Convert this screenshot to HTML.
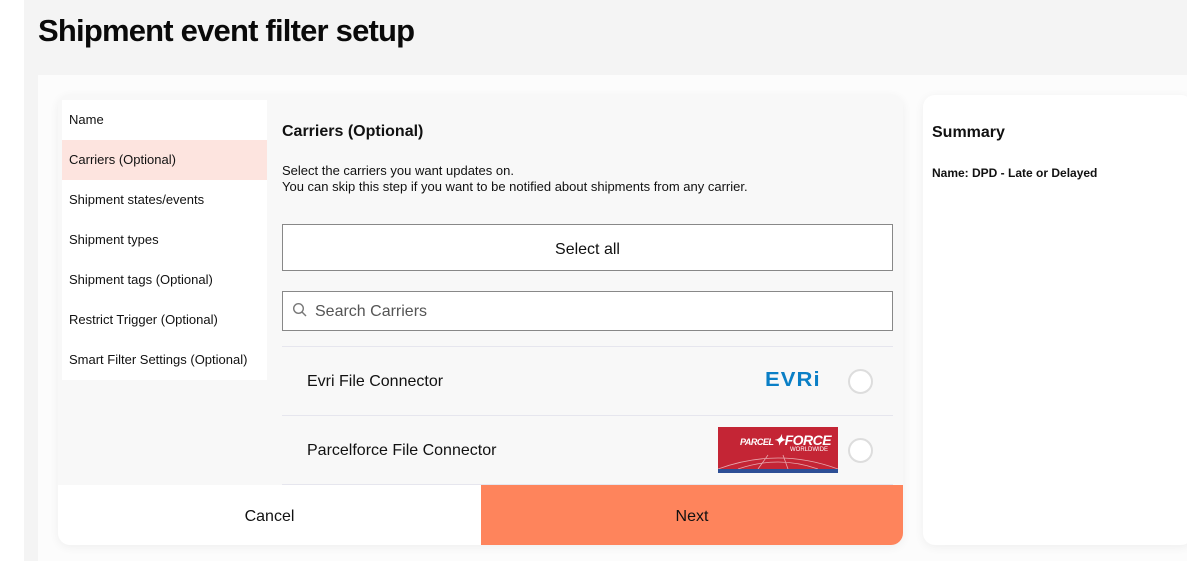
<!DOCTYPE html>
<html><head><style>
*{margin:0;padding:0;box-sizing:border-box}
body{width:1187px;height:561px;overflow:hidden;background:#fff;font-family:"Liberation Sans",sans-serif;color:#111;position:relative}
.abs{position:absolute}
.bg{left:24px;top:0;width:1163px;height:561px;background:#f4f4f4}
h1{position:absolute;left:38px;top:13px;font-size:31px;font-weight:bold;letter-spacing:-0.8px;color:#0a0a0a}
.inner{left:38px;top:75px;width:1149px;height:486px;background:#fcfcfc}
.card{left:58px;top:95px;width:845px;height:450px;background:#f8f8f8;border-radius:12px;box-shadow:0 2px 10px rgba(0,0,0,.06);overflow:hidden}
.side{left:62px;top:100px;width:205px;height:280px;background:#fff}
.side div{height:40px;line-height:40px;padding-left:7px;font-size:13px}
.side .act{background:#fde4df}
.sum{left:923px;top:95px;width:270px;height:450px;background:#fff;border-radius:12px;box-shadow:0 2px 10px rgba(0,0,0,.06)}
.btn{left:282px;top:224px;width:611px;height:47px;border:1.5px solid #888;background:#fff;text-align:center;line-height:50px;font-size:16px}
.search{left:282px;top:291px;width:611px;height:40px;border:1px solid #888;background:#fff;font-size:16px;color:#555;line-height:40px;padding-left:32px}
.row{left:282px;width:611px;height:69px;border-top:1px solid #e6e6ee;font-size:16px;line-height:68px;padding-left:25px}
.radio{width:25px;height:25px;border:2px solid #ddd;border-radius:50%;background:#fff}
</style></head><body>
<div class="abs bg"></div>
<h1>Shipment event filter setup</h1>
<div class="abs inner"></div>
<div class="abs card"></div>
<div class="abs side">
<div>Name</div><div class="act">Carriers (Optional)</div><div>Shipment states/events</div><div>Shipment types</div><div>Shipment tags (Optional)</div><div>Restrict Trigger (Optional)</div><div>Smart Filter Settings (Optional)</div>
</div>
<div class="abs" style="left:282px;top:123px;font-size:16px;font-weight:bold">Carriers (Optional)</div>
<div class="abs" style="left:282px;top:163px;font-size:13px;line-height:16px">Select the carriers you want updates on.<br>You can skip this step if you want to be notified about shipments from any carrier.</div>
<div class="abs btn">Select all</div>
<div class="abs search">Search Carriers</div>
<svg class="abs" style="left:292px;top:302px" width="16" height="16" viewBox="0 0 16 16"><circle cx="6.5" cy="6.5" r="4.8" fill="none" stroke="#777" stroke-width="1.4"/><line x1="10" y1="10" x2="14" y2="14" stroke="#777" stroke-width="1.4"/></svg>
<div class="abs row" style="top:346px;line-height:70px">Evri File Connector</div>
<div class="abs" style="left:765px;top:369px;font-size:20px;font-weight:bold;color:#0a7fc6;letter-spacing:1px;transform:scaleX(1.1);transform-origin:left">EVRi</div>
<div class="abs radio" style="left:848px;top:369px"></div>
<div class="abs row" style="top:415px;line-height:70px">Parcelforce File Connector</div>
<div class="abs" style="left:718px;top:427px;width:120px;height:46px;background:#c42535;overflow:hidden">
<div class="abs" style="left:22px;top:5px;color:#fff;font-size:14px;font-style:italic;font-weight:bold;letter-spacing:-0.5px"><span style="font-size:9px">PARCEL</span>✦FORCE</div>
<div class="abs" style="left:72px;top:20px;color:#fff;font-size:6px">WORLDWIDE</div>
<svg class="abs" style="left:0;top:26px" width="120" height="16"><path d="M0 16 Q60 -6 120 16 M20 16 Q60 2 100 16 M40 16 L50 2 M70 16 L65 2" fill="none" stroke="#fff" stroke-opacity=".6" stroke-width=".8"/></svg>
<div class="abs" style="left:0;bottom:0;width:120px;height:4px;background:#2d4f96"></div>
</div>
<div class="abs radio" style="left:848px;top:438px"></div>
<div class="abs" style="left:282px;top:484px;width:611px;height:1px;background:#e6e6ee"></div>
<div class="abs" style="left:58px;top:485px;width:423px;height:60px;background:#fff;border-bottom-left-radius:12px;text-align:center;line-height:63px;font-size:16px">Cancel</div>
<div class="abs" style="left:481px;top:485px;width:422px;height:60px;background:#fe845c;border-bottom-right-radius:12px;text-align:center;line-height:63px;font-size:16px">Next</div>
<div class="abs sum"></div>
<div class="abs" style="left:932px;top:124px;font-size:16px;font-weight:bold">Summary</div>
<div class="abs" style="left:932px;top:166px;font-size:12px;font-weight:bold">Name: DPD - Late or Delayed</div>
</body></html>
